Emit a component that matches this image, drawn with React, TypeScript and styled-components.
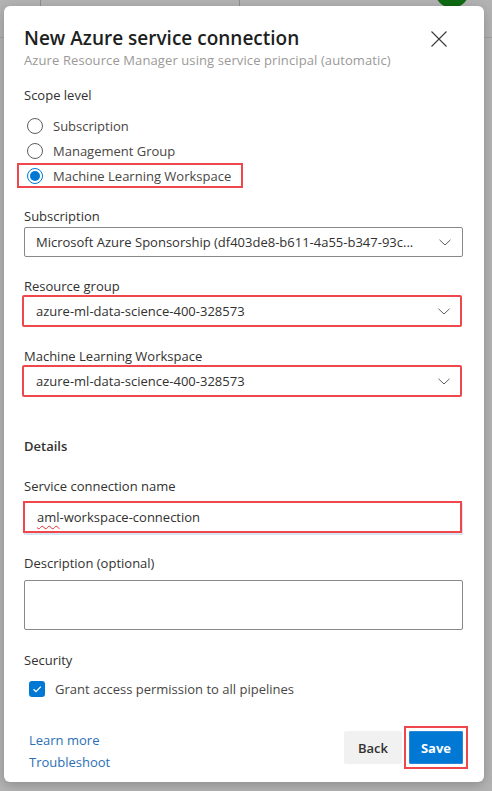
import React from "react";
import styled, { createGlobalStyle } from "styled-components";

const Global = createGlobalStyle`
  html, body { margin: 0; padding: 0; }
  body {
    background: #b3b3b3;
    font-family: "Open Sans", "Noto Sans", sans-serif;
    overflow: hidden;
  }
  * { box-sizing: border-box; }
`;

const Page = styled.div`
  position: relative;
  width: 492px;
  height: 791px;
  overflow: hidden;
  background: #b3b3b3;
`;

const AppHeader = styled.div`
  display: flex;
  align-items: flex-start;
  height: 38px;
  border-bottom: 1px solid #a2a2a2;
`;

const HeaderCell = styled.div<{ $w: number }>`
  width: ${(p) => p.$w}px;
  height: 100%;
  border-right: 1px solid #8e8e8e;
`;

const Spacer = styled.div`
  flex: 1;
`;

const Avatar = styled.div`
  width: 34px;
  height: 34px;
  margin-top: -26px;
  margin-right: 23px;
  border-radius: 50%;
  background: #0f6a12;
`;

const Dialog = styled.div`
  position: absolute;
  top: 6px;
  left: 4px;
  width: 480px;
  background: #ffffff;
  border-radius: 6px;
  box-shadow: 0 3px 12px rgba(0, 0, 0, 0.22);
  padding: 19px 21px 9px 20px;
  color: #323130;
`;

const TitleRow = styled.div`
  display: flex;
  align-items: center;
  justify-content: space-between;
  height: 26px;
`;

const Title = styled.h1`
  margin: 0;
  font-size: 19px;
  line-height: 26px;
  font-weight: 600;
  color: #201f1e;
`;

const CloseBtn = styled.button`
  display: flex;
  width: 16px;
  height: 16px;
  margin-right: 16px;
  margin-top: 1px;
  padding: 0;
  border: 0;
  background: transparent;
`;

const Subtitle = styled.div`
  margin-top: 1px;
  font-size: 13px;
  letter-spacing: 0.1px;
  line-height: 16px;
  color: #9b9997;
`;

const Label = styled.div<{ $mt: number; $bold?: boolean }>`
  margin-top: ${(p) => p.$mt}px;
  font-size: 13px;
  line-height: 20px;
  font-weight: ${(p) => (p.$bold ? 600 : 400)};
  color: #323130;
`;

const RadioGroup = styled.div`
  display: flex;
  flex-direction: column;
  margin-top: 8px;
`;

const RadioRow = styled.div<{ $hl?: boolean }>`
  display: flex;
  align-items: center;
  width: fit-content;
  height: 25px;
  margin-left: -7px;
  padding: 0 10px 0 8px;
  border: 2px solid ${(p) => (p.$hl ? "#f0474c" : "transparent")};
  font-size: 13px;
  line-height: 20px;
  color: #484644;
`;

const RadioCircle = styled.span<{ $on?: boolean }>`
  display: flex;
  align-items: center;
  justify-content: center;
  width: 16px;
  height: 16px;
  margin-right: 10px;
  border-radius: 50%;
  border: 1px solid ${(p) => (p.$on ? "#0078d4" : "#605e5c")};
  &::after {
    content: "";
    display: ${(p) => (p.$on ? "block" : "none")};
    width: 10px;
    height: 10px;
    border-radius: 50%;
    background: #0078d4;
  }
`;

const Dropdown = styled.div<{ $hl?: boolean }>`
  display: flex;
  align-items: center;
  justify-content: space-between;
  height: ${(p) => (p.$hl ? 32 : 30)}px;
  margin-top: ${(p) => (p.$hl ? -1 : 1)}px;
  margin-left: ${(p) => (p.$hl ? -2 : 0)}px;
  width: ${(p) => (p.$hl ? "calc(100% + 1px)" : "100%")};
  padding: 0 ${(p) => (p.$hl ? 10 : 11)}px 0 ${(p) => (p.$hl ? 12 : 11)}px;
  border: ${(p) => (p.$hl ? "2px solid #f0474c" : "1px solid #8a8886")};
  border-radius: 2px;
  font-size: 13px;
  color: #323130;
`;

const DropText = styled.span`
  white-space: nowrap;
  overflow: hidden;
`;

const TextInput = styled.div`
  display: flex;
  align-items: center;
  height: 32px;
  margin-top: 5px;
  margin-left: -1px;
  width: 100%;
  padding-left: 12px;
  border: 2px solid #f0474c;
  font-size: 13px;
  color: #323130;
  box-shadow: 1px 2px 0 #d6e6f5;
`;

const Misspelled = styled.span`
  text-decoration: underline wavy #e0302f;
  text-decoration-thickness: 1px;
  text-underline-offset: 3px;
`;

const TextArea = styled.div`
  height: 50px;
  margin-top: 7px;
  border: 1px solid #8a8886;
  border-radius: 2px;
`;

const CheckRow = styled.div`
  display: flex;
  align-items: center;
  height: 20px;
  margin-top: 9px;
  padding-left: 5px;
  font-size: 13px;
  color: #484644;
`;

const CheckBox = styled.span`
  display: flex;
  align-items: center;
  justify-content: center;
  width: 16px;
  height: 16px;
  margin-right: 10px;
  border-radius: 3px;
  background: #0078d4;
`;

const Footer = styled.div`
  display: flex;
  justify-content: space-between;
  align-items: flex-start;
  margin-top: 30px;
`;

const Links = styled.div`
  display: flex;
  flex-direction: column;
  padding-left: 5px;
`;

const Link = styled.a`
  font-size: 13px;
  line-height: 22px;
  color: #2b6fb6;
  text-decoration: none;
`;

const Buttons = styled.div`
  display: flex;
  align-items: center;
  gap: 2px;
  margin-top: -3px;
  margin-right: -5px;
`;

const Highlight = styled.div`
  display: flex;
  padding: 3px;
  border: 2px solid #f0474c;
`;

const Button = styled.button<{ $primary?: boolean }>`
  height: 33px;
  padding: 0 ${(p) => (p.$primary ? 12 : 14)}px;
  border: 0;
  border-radius: 2px;
  font-family: "Open Sans", "Noto Sans", sans-serif;
  font-size: 13px;
  font-weight: ${(p) => (p.$primary ? 700 : 600)};
  color: ${(p) => (p.$primary ? "#ffffff" : "#323130")};
  background: ${(p) => (p.$primary ? "#0078d4" : "#f1f1f1")};
  box-shadow: ${(p) => (p.$primary ? "inset 0 0 0 1px #2b88d8" : "none")};
`;

const Chevron = () => (
  <svg width="12" height="7" viewBox="0 0 12 7" fill="none">
    <path d="M0.5 0.8 L6 6 L11.5 0.8" stroke="#605e5c" strokeWidth="1" />
  </svg>
);

const CloseIcon = () => (
  <svg width="16" height="16" viewBox="0 0 16 16" fill="none">
    <path d="M0.5 0.5 L15.5 15.5 M15.5 0.5 L0.5 15.5" stroke="#3b3a39" strokeWidth="1.1" />
  </svg>
);

const CheckIcon = () => (
  <svg width="12" height="12" viewBox="0 0 12 12" fill="none">
    <path d="M2.5 6.2 L5 8.6 L9.8 3.6" stroke="#ffffff" strokeWidth="1.3" />
  </svg>
);

export default function App() {
  return (
    <>
      <Global />
      <Page>
        <AppHeader>
          <HeaderCell $w={41} />
          <HeaderCell $w={199} />
          <Spacer />
          <Avatar />
        </AppHeader>
        <Dialog>
          <TitleRow>
            <Title>New Azure service connection</Title>
            <CloseBtn aria-label="Close">
              <CloseIcon />
            </CloseBtn>
          </TitleRow>
          <Subtitle>Azure Resource Manager using service principal (automatic)</Subtitle>

          <Label $mt={17}>Scope level</Label>
          <RadioGroup>
            <RadioRow>
              <RadioCircle />
              Subscription
            </RadioRow>
            <RadioRow>
              <RadioCircle />
              Management Group
            </RadioRow>
            <RadioRow $hl>
              <RadioCircle $on />
              Machine Learning Workspace
            </RadioRow>
          </RadioGroup>

          <Label $mt={18}>Subscription</Label>
          <Dropdown>
            <DropText>Microsoft Azure Sponsorship (df403de8-b611-4a55-b347-93c...</DropText>
            <Chevron />
          </Dropdown>

          <Label $mt={19}>Resource group</Label>
          <Dropdown $hl>
            <DropText>azure-ml-data-science-400-328573</DropText>
            <Chevron />
          </Dropdown>

          <Label $mt={19}>Machine Learning Workspace</Label>
          <Dropdown $hl>
            <DropText>azure-ml-data-science-400-328573</DropText>
            <Chevron />
          </Dropdown>

          <Label $mt={39} $bold>
            Details
          </Label>

          <Label $mt={20}>Service connection name</Label>
          <TextInput>
            <span>
              <Misspelled>aml</Misspelled>-workspace-connection
            </span>
          </TextInput>

          <Label $mt={20}>Description (optional)</Label>
          <TextArea />

          <Label $mt={20}>Security</Label>
          <CheckRow>
            <CheckBox>
              <CheckIcon />
            </CheckBox>
            Grant access permission to all pipelines
          </CheckRow>

          <Footer>
            <Links>
              <Link href="#">Learn more</Link>
              <Link href="#">Troubleshoot</Link>
            </Links>
            <Buttons>
              <Button>Back</Button>
              <Highlight>
                <Button $primary>Save</Button>
              </Highlight>
            </Buttons>
          </Footer>
        </Dialog>
      </Page>
    </>
  );
}
